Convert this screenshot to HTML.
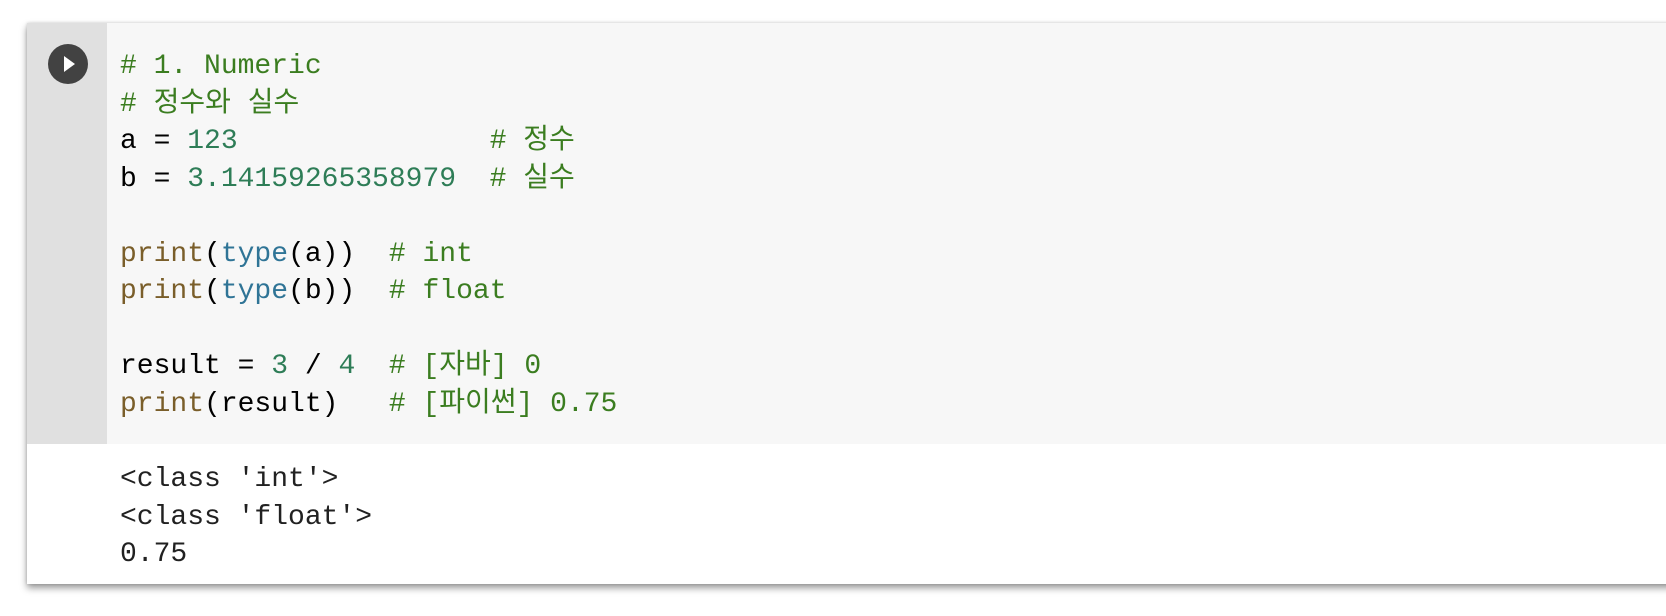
<!DOCTYPE html>
<html><head><meta charset="utf-8"><style>
html,body{margin:0;padding:0;background:#fff;width:1666px;height:616px;overflow:hidden}
.cell{position:absolute;left:27px;top:23px;width:1700px;height:561px;background:#fff;box-shadow:0 4px 7px rgba(0,0,0,.4),0 0 3px rgba(0,0,0,.15)}
.gut{position:absolute;left:0;top:0;width:80px;height:421px;background:#e0e0e0}
.code{position:absolute;left:80px;top:0;right:0;height:421px;background:#f7f7f7}
.run{position:absolute;left:21px;top:21px;width:40px;height:40px;border-radius:50%;background:#424242}
.run:after{content:"";position:absolute;left:16px;top:12px;border-left:11px solid #fff;border-top:8px solid transparent;border-bottom:8px solid transparent}
pre{margin:0;position:absolute;font-family:"Liberation Mono","Noto Sans CJK KR",monospace;font-size:28px;line-height:37.5px;color:#000}
.src{left:93px;top:25px}
.out{left:93px;top:438px;color:#212121}
.c{color:#3b7d20}.n{color:#2e7d57}.f{color:#7a5e2a}.t{color:#2f7496}
</style></head><body>
<div class="cell">
<div class="gut"></div><div class="code"></div><div class="run"></div>
<pre class="src"><span class="c"># 1. Numeric</span>
<span class="c"># 정수와 실수</span>
a = <span class="n">123</span>               <span class="c"># 정수</span>
b = <span class="n">3.14159265358979</span>  <span class="c"># 실수</span>

<span class="f">print</span>(<span class="t">type</span>(a))  <span class="c"># int</span>
<span class="f">print</span>(<span class="t">type</span>(b))  <span class="c"># float</span>

result = <span class="n">3</span> / <span class="n">4</span>  <span class="c"># [자바] 0</span>
<span class="f">print</span>(result)   <span class="c"># [파이썬] 0.75</span></pre>
<pre class="out">&lt;class 'int'&gt;
&lt;class 'float'&gt;
0.75</pre>
</div>
</body></html>
